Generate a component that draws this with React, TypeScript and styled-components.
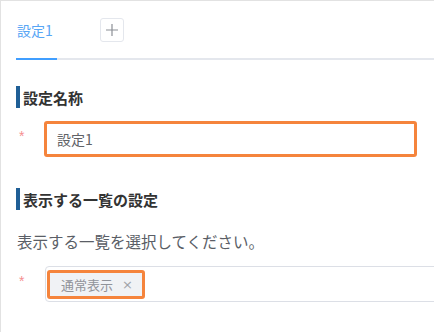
import React from "react";
import styled, { createGlobalStyle } from "styled-components";

const GlobalStyle = createGlobalStyle`
  html, body {
    margin: 0;
    padding: 0;
    background: #fff;
    overflow: hidden;
  }
  body {
    font-family: "Noto Sans CJK JP", "Noto Sans", sans-serif;
  }
`;

const Panel = styled.div`
  width: 434px;
  height: 332px;
  box-sizing: border-box;
  border-top: 1px solid #e2e2e2;
  border-left: 1px solid #e2e2e2;
  padding: 0 0 0 15px;
  overflow: hidden;
`;

const TabBar = styled.div`
  display: flex;
  align-items: flex-end;
  height: 57px;
  border-bottom: 2px solid #e4e7ed;
  margin-right: -20px;
`;

const Tab = styled.div<{ active?: boolean }>`
  position: relative;
  height: 100%;
  box-sizing: border-box;
  padding: 0 4px 0 1px;
  display: flex;
  align-items: center;
  font-size: 14px;
  color: ${(p) => (p.active ? "#58a6f5" : "#303133")};
  &::after {
    content: "";
    position: absolute;
    left: 0;
    right: 0;
    bottom: -2px;
    height: 2px;
    background: ${(p) => (p.active ? "#409eff" : "transparent")};
  }
`;

const AddButton = styled.button`
  align-self: center;
  margin: 0 0 0 43px;
  width: 24px;
  height: 24px;
  padding: 0;
  border: 1px solid #e4e7ed;
  border-radius: 3px;
  background: #fff;
  display: flex;
  align-items: center;
  justify-content: center;
  svg {
    display: block;
  }
`;

const SectionTitle = styled.h3<{ top: number }>`
  margin: ${(p) => p.top}px 0 0 0;
  border-left: 4px solid #1f5f96;
  height: 22px;
  padding-left: 3px;
  display: flex;
  align-items: center;
  font-size: 15px;
  font-weight: 700;
  color: #333;
`;

const Description = styled.p`
  margin: 20px 0 0 1px;
  font-size: 15.5px;
  color: #5a5e66;
`;

const FormRow = styled.div<{ top: number }>`
  display: flex;
  align-items: center;
  margin-top: ${(p) => p.top}px;
`;

const Required = styled.span`
  flex-shrink: 0;
  width: 28px;
  box-sizing: border-box;
  padding-left: 3px;
  color: #f58f8f;
  font-size: 14px;
  font-family: "Liberation Sans", sans-serif;
  margin-top: -6px;
`;

const TextInput = styled.div`
  flex-shrink: 0;
  width: 373px;
  height: 36px;
  box-sizing: border-box;
  border: 3px solid #f5843c;
  border-radius: 3px;
  padding-left: 10px;
  display: flex;
  align-items: center;
  font-size: 14px;
  color: #606266;
`;

const SelectBox = styled.div`
  flex-shrink: 0;
  width: 420px;
  height: 36px;
  box-sizing: border-box;
  border: 1px solid #dcdfe6;
  border-radius: 4px;
  margin-left: 1px;
  display: flex;
  align-items: center;
  padding-left: 1px;
`;

const Tag = styled.span`
  display: inline-flex;
  align-items: center;
  gap: 9px;
  height: 29px;
  width: 98px;
  box-sizing: border-box;
  border: 3px solid #f5843c;
  border-radius: 3px;
  background: #f0f2f5;
  padding-left: 11px;
  font-size: 13px;
  color: #909399;
`;

const Close = styled.span`
  font-family: "DejaVu Sans", sans-serif;
  font-size: 13px;
  color: #a0a3a8;
`;

export default function App() {
  return (
    <>
      <GlobalStyle />
      <Panel>
        <TabBar>
          <Tab active>設定1</Tab>
          <AddButton aria-label="add">
            <svg width="14" height="14" viewBox="0 0 14 14">
              <path d="M7 1v12M1 7h12" stroke="#8c8f96" strokeWidth="1.2" fill="none" />
            </svg>
          </AddButton>
        </TabBar>

        <SectionTitle top={26}>設定名称</SectionTitle>
        <FormRow top={13}>
          <Required>*</Required>
          <TextInput>設定1</TextInput>
        </FormRow>

        <SectionTitle top={31}>表示する一覧の設定</SectionTitle>
        <Description>表示する一覧を選択してください。</Description>
        <FormRow top={14}>
          <Required>*</Required>
          <SelectBox>
            <Tag>
              通常表示<Close>×</Close>
            </Tag>
          </SelectBox>
        </FormRow>
      </Panel>
    </>
  );
}
